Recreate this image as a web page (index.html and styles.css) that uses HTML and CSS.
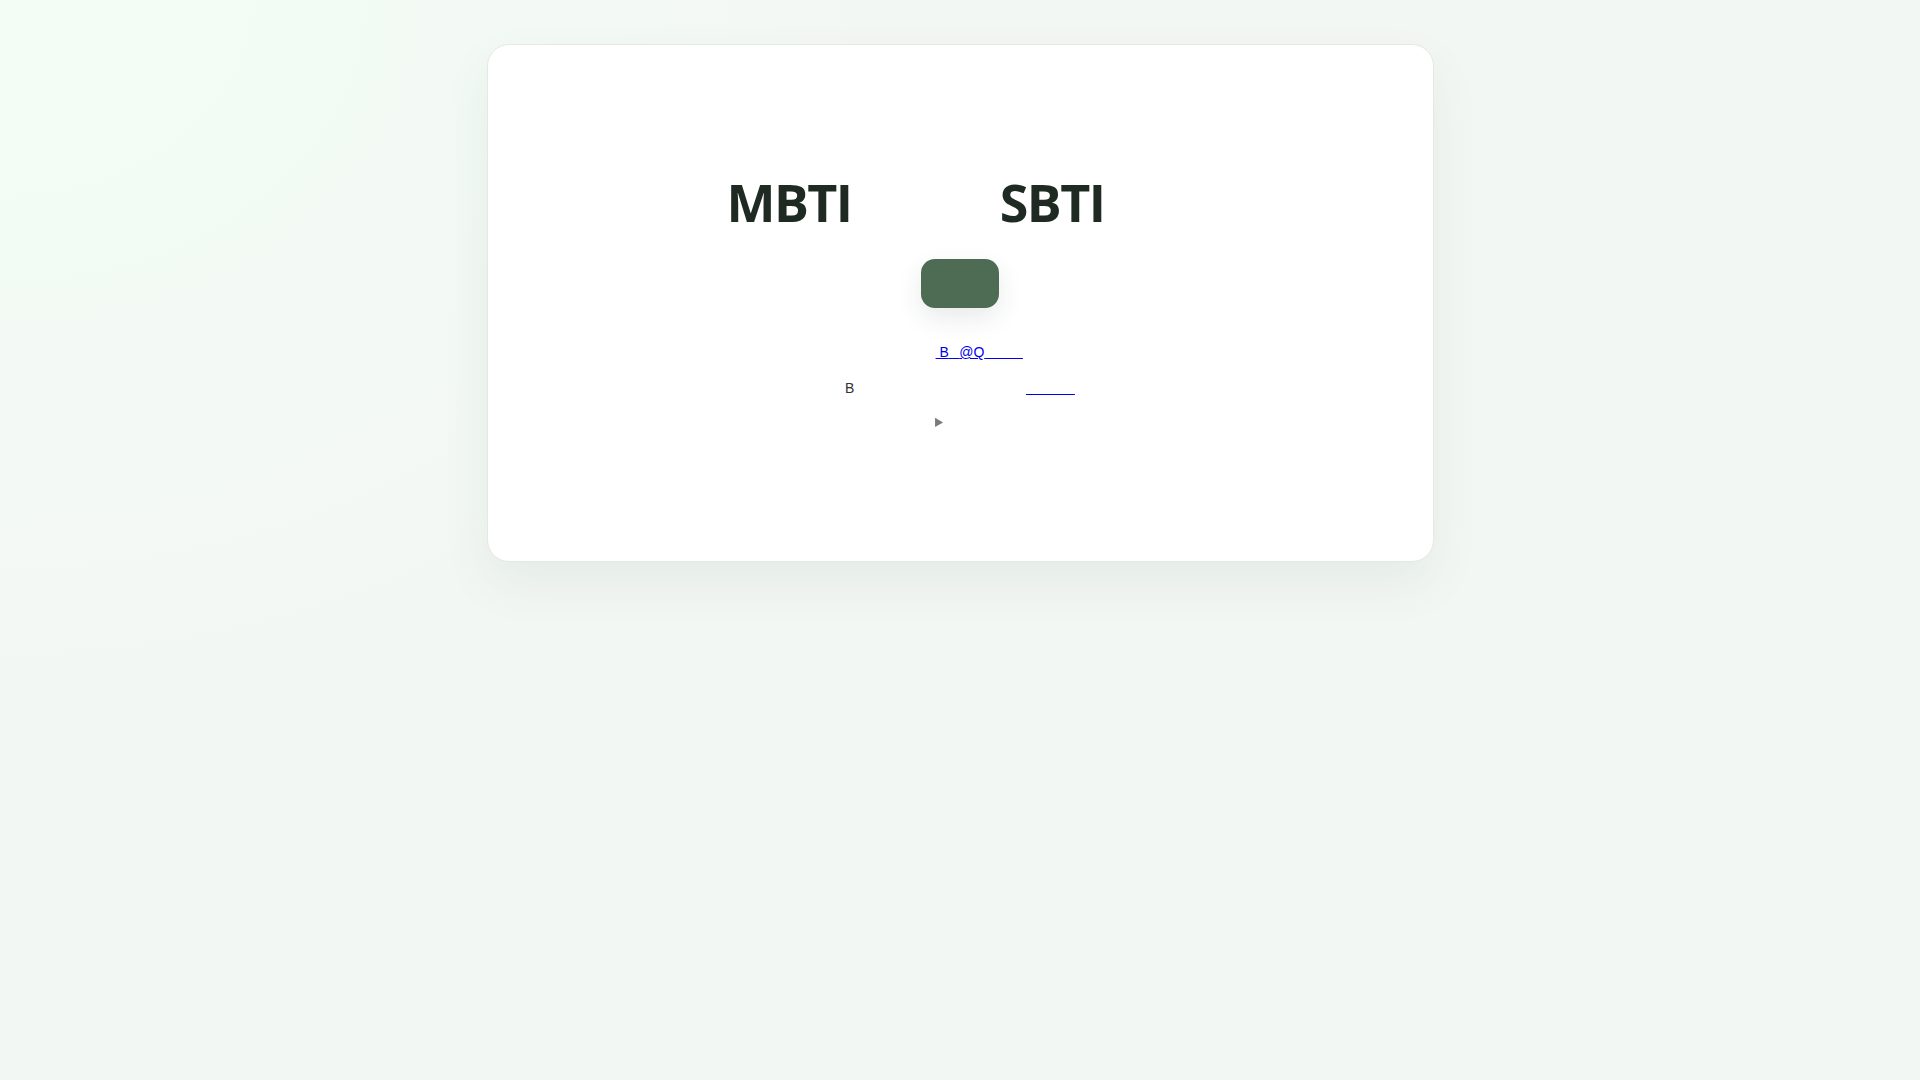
FILE: index.html
```html
<!DOCTYPE html>
<html lang="zh">
<head>
<meta charset="utf-8">
<title>MBTI SBTI</title>
<link rel="stylesheet" href="styles.css">
</head>
<body>
<main class="page">
  <section class="card">
    <h1 class="title">MBTI<span class="blank">&#8195;&#8195;&#8194;&#8196;&#8198;</span>SBTI<span class="blank">&#8195;&#8194;&#8198;&#8198;</span></h1>
    <button class="start" type="button"></button>
    <p class="author"><span class="blank">&#8195;&#8195;&#8194;&#8197;</span><a href="#">&nbsp;B<span class="blank">&#8194;&#8197;</span>@Q<span class="blank">&#8195;&#8195;&#8194;&#8197;</span></a></p>
    <p class="note">B<span class="blank">&#8195;&#8195;&#8195;&#8195;&#8195;&#8195;&#8195;&#8195;&#8195;&#8195;&#8195;&#8195;&#8197;</span><a href="#"><span class="blank">&#8195;&#8195;&#8195;&#8194;</span></a></p>
    <details class="more">
      <summary><span class="blank">&#8195;&#8195;&#8194;</span></summary>
    </details>
  </section>
</main>
</body>
</html>
```
FILE: styles.css
```css
html, body {
  margin: 0;
  padding: 0;
}
body {
  min-height: 100vh;
  background:
    radial-gradient(ellipse 900px 700px at 0 0, #f3fdf5 0%, rgba(243, 253, 245, 0) 100%),
    #f3f7f4;
  font-family: "Liberation Sans", Arial, sans-serif;
  color: #2a2a2a;
}
.page {
  padding-top: 44px;
  display: flex;
  justify-content: center;
}
.card {
  box-sizing: border-box;
  width: 947px;
  padding: 126px 40px 128px;
  background: #ffffff;
  border: 1px solid #e2eae4;
  border-radius: 22px;
  box-shadow: 0 22px 50px rgba(45, 80, 55, 0.07);
  display: flex;
  flex-direction: column;
  align-items: center;
  text-align: center;
}
.blank {
  white-space: pre;
}
.title {
  margin: 0;
  font-family: "Open Sans", "Noto Sans", sans-serif;
  font-weight: 700;
  font-size: 52px;
  line-height: 62px;
  letter-spacing: -0.03em;
  color: #1f2a23;
  white-space: nowrap;
}
.start {
  margin-top: 26px;
  width: 78px;
  height: 49px;
  border: 0;
  border-radius: 14px;
  background: #4e6b54;
  box-shadow: 0 10px 26px rgba(30, 50, 35, 0.10);
  cursor: pointer;
}
.author, .note {
  margin: 0;
  font-size: 14px;
  line-height: 22px;
  white-space: nowrap;
}
.author {
  margin-top: 33px;
}
.note {
  margin-top: 14px;
  color: #333333;
}
a {
  color: #0000ee;
}
.more {
  margin-top: 12px;
  font-size: 14px;
  line-height: 22px;
  color: #7a7a7a;
}
.more summary {
  cursor: pointer;
}
```
